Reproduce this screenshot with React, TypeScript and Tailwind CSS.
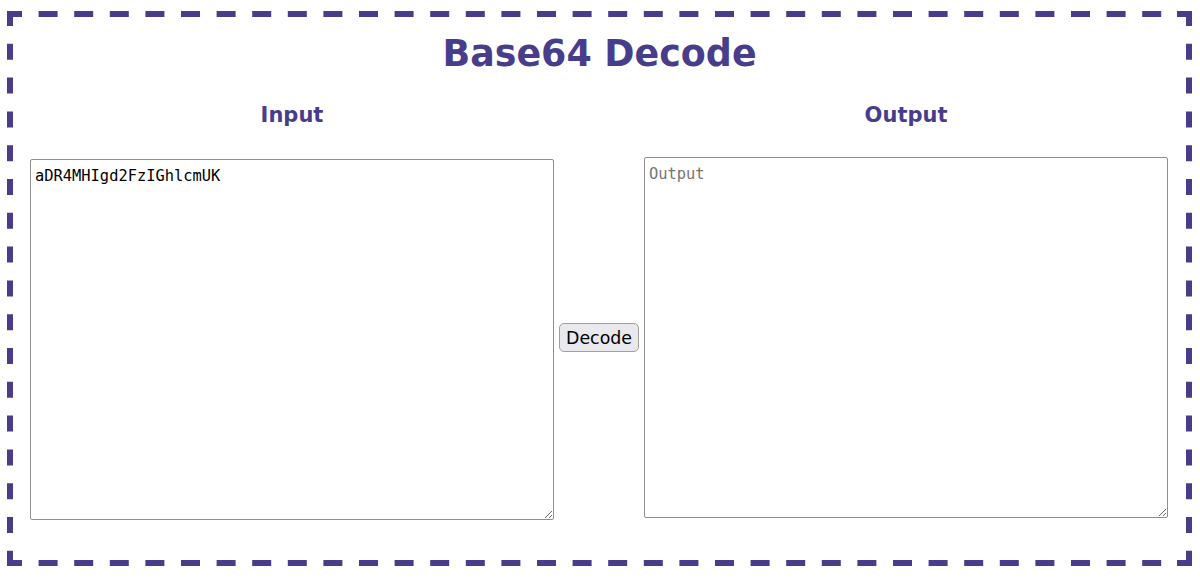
import { useState } from 'react';

// dashed frame drawn as svg so dash length / gaps match the reference
function DashedFrame() {
  const c = '#483d8b';
  return (
    <svg className="pointer-events-none absolute inset-0" width="1185" height="555" viewBox="0 0 1185 555">
      <g stroke={c} strokeWidth="6" fill="none">
        <line x1="15" y1="3" x2="1170" y2="3" strokeDasharray="19 16.6" strokeDashoffset="19" />
        <line x1="15" y1="552" x2="1170" y2="552" strokeDasharray="19 16.6" strokeDashoffset="19" />
        <line x1="3" y1="15" x2="3" y2="540" strokeDasharray="16 17.8" strokeDashoffset="16" />
        <line x1="1182" y1="15" x2="1182" y2="540" strokeDasharray="16 17.8" strokeDashoffset="16" />
      </g>
      <g fill={c}>
        <path d="M0 0H15V6H6V15H0Z" />
        <path d="M1185 0H1170V6H1179V15H1185Z" />
        <path d="M0 555H15V549H6V540H0Z" />
        <path d="M1185 555H1170V549H1179V540H1185Z" />
      </g>
    </svg>
  );
}

export default function App() {
  const [input, setInput] = useState('aDR4MHIgd2FzIGhlcmUK');
  const [output, setOutput] = useState('');

  const decode = () => {
    try {
      setOutput(atob(input.trim()));
    } catch {
      setOutput('Invalid input');
    }
  };

  return (
    <div className="w-[1200px] h-[582px] bg-white pt-[11px] pl-[7px]" style={{ fontFamily: '"DejaVu Sans", sans-serif' }}>
      <div className="relative w-[1185px] h-[555px] p-[6px]">
        <DashedFrame />
        <h1 className="mt-[15px] text-center text-[36.4px] leading-[44px] font-bold text-[#483d8b]">Base64 Decode</h1>

        <div className="mt-[27px] flex items-start pl-[17px]">
          {/* Input */}
          <div className="w-[524px] flex flex-col">
            <h3 className="h-[24px] text-center text-[21px] leading-[24px] font-bold text-[#483d8b]">Input</h3>
            <textarea
              value={input}
              onChange={(e) => setInput(e.target.value)}
              className="mt-[32px] h-[361px] w-[524px] border border-[#8f8f8f] rounded-[2px] px-[4px] py-[7px] text-[15.4px] leading-[18px] text-black outline-none"
              style={{ fontFamily: '"DejaVu Sans Mono", monospace' }}
            />
          </div>

          <button
            onClick={decode}
            className="mt-[220px] mx-[5px] h-[29px] px-[6px] border border-[#a0a0a0] rounded-[5px] bg-[#e9e9ed] text-[17.4px] leading-[20px] text-black"
          >
            Decode
          </button>

          {/* Output */}
          <div className="w-[524px] flex flex-col">
            <h3 className="h-[24px] text-center text-[21px] leading-[24px] font-bold text-[#483d8b]">Output</h3>
            <textarea
              value={output}
              readOnly
              placeholder="Output"
              className="mt-[30px] h-[361px] w-[524px] border border-[#8f8f8f] rounded-[2px] px-[4px] py-[7px] text-[15.4px] leading-[18px] text-black placeholder:text-[#757575] outline-none"
              style={{ fontFamily: '"DejaVu Sans Mono", monospace' }}
            />
          </div>
        </div>
      </div>
    </div>
  );
}
